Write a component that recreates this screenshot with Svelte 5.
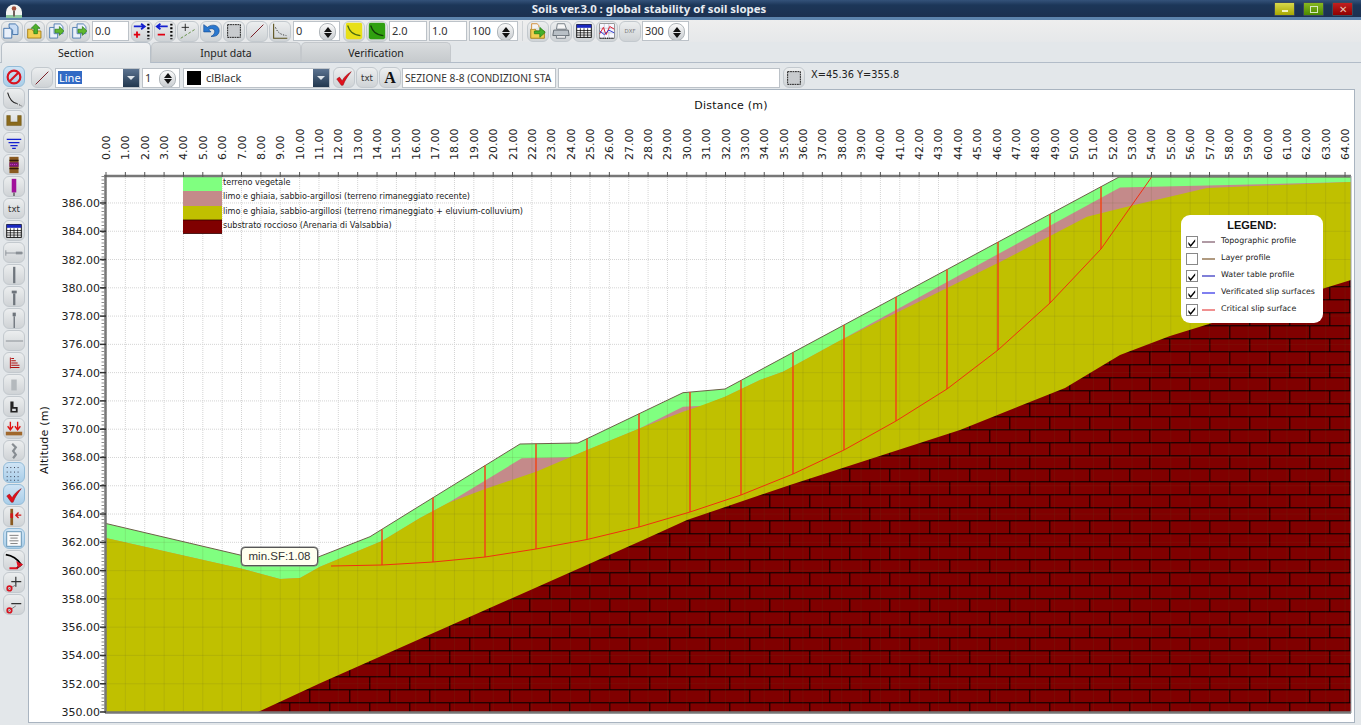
<script>
  // plot scale, in page pixels
  const x0 = 106, xUnit = 19.36, yBase = 712, yUnit = 14.14, top = 176, right = 1351;
  const xAt = (v) => x0 + v * xUnit;
  const yAt = (v) => yBase - (v - 350) * yUnit;

  const xTicks = Array.from({ length: 65 }, (_, i) => i);
  const yTicks = Array.from({ length: 19 }, (_, i) => 350 + i * 2);

  const ground = [[106,523.5],[240,555],[283,565],[300,565],[319,556.7],[370,536.7],[413,510],[520,444],[578,443],[683,392.7],[725,389],[1119,177],[1351,177]];
  const soilTop = [[106,538],[240,568.3],[280,579],[300,578],[320,566.7],[382,541],[420,518],[448,503],[485,489],[536,471.7],[570,457.3],[587,450],[640,428.3],[683,411.7],[700,406],[725,396.7],[760,380],[783,371.7],[840,340.5],[1000,262],[1087,216.7],[1127,206.7],[1207,188],[1351,182]];
  const pinkTop = [[106,538],[240,568.3],[280,579],[300,578],[320,566.7],[382,541],[420,518],[448,503],[521.7,458.3],[570,457.3],[587,450],[640,428.3],[683,406.7],[703,405.7],[725,396.7],[760,380],[783,371.7],[1000,253],[1120,187.5],[1351,182]];
  const rockTop = [[258,712],[320,683.3],[643,540],[687,520],[790,485],[960,430],[1065,388],[1120,355],[1170,336],[1351,280]];
  const slip = [[331,566],[382,565],[433,562],[485,557],[536,549],[587,539.5],[639,527],[690,512],[741,495],[793,474],[844,450],[896,421],[947,389],[998,350],[1050,303],[1101,249],[1152,176.5]];

  const pts = (list) => list.map((p) => p.join(",")).join(" ");
  const area = (list) => pts(list) + " 1351,712 106,712";

  function groundAt(x) {
    for (let i = 1; i < ground.length; i++) {
      const [ax, ay] = ground[i - 1], [bx, by] = ground[i];
      if (x <= bx) return ay + ((x - ax) / (bx - ax)) * (by - ay);
    }
    return 177;
  }
  const slices = slip.slice(1, -1).map(([x, y]) => ({ x, y, top: groundAt(x) }));

  const soilKey = [
    { color: "#80ff80", y: 177, h: 14, text: "terreno vegetale" },
    { color: "#c48a8a", y: 191, h: 15, text: "limo e ghiaia, sabbio-argillosi (terreno rimaneggiato recente)" },
    { color: "#c0c000", y: 206, h: 14, text: "limo e ghiaia, sabbio-argillosi (terreno rimaneggiato + eluvium-colluvium)" },
    { color: "#800000", y: 220, h: 13.5, text: "substrato roccioso (Arenaria di Valsabbia)" }
  ];

  const legend = [
    { on: true, color: "#b09aa4", text: "Topographic profile" },
    { on: false, color: "#b09a80", text: "Layer profile" },
    { on: true, color: "#8080d8", text: "Water table profile" },
    { on: true, color: "#8080f0", text: "Verificated slip surfaces" },
    { on: true, color: "#f09090", text: "Critical slip surface" }
  ];

  const folder = `<path d="M3 9h5l1 2h9v8H3z" fill="#f2cf52" stroke="#a67c12"/>`;
  const page = `<path d="M8 3h7l3 3v8H8z" fill="#e9f0fa" stroke="#4a78ad"/>`;
  const check = `<path d="M3 12l3-2 3 4c2-4 5-7 10-10-3 4-7 9-9 15H8z" fill="#e0101c" stroke="#8a0a12" stroke-width=".5"/>`;
  const slope = (c) => `<path d="M4 5c2 6 5 10 14 11" fill="none" stroke="${c}" stroke-width="1.4"/>`;

  const icons = {
    docs: `<path d="M2 8h7l2 2v9H2z" fill="#e9f0fa" stroke="#3b6ea8"/><path d="M8 3h7l3 3v9h-6v-5l-3-3H8z" fill="#c8dcf4" stroke="#3b6ea8"/>`,
    open: `${folder}<path d="M12 3l5 5h-3v6h-4V8H7z" fill="#4fb02c" stroke="#1f7a14" stroke-width=".8"/>`,
    save: `<path d="M3 7h7l2 2v10H3z" fill="#e9f0fa" stroke="#4a78ad"/>${page}<path d="M9 9h5V6l5 5-5 5v-3H9z" fill="#5fb82e" stroke="#2a7d16" stroke-width=".8"/>`,
    add: `<path d="M2 6h11M10 3l4 3-4 3" fill="none" stroke="#1420d0" stroke-width="2"/><path d="M2 15h7M5.5 11.500v7" stroke="#e00010" stroke-width="2"/><path d="M18 3v17" stroke="#000" stroke-width="2.500" stroke-dasharray="2 2"/>`,
    del: `<path d="M14 6H3M6 3L2 6l4 3" fill="none" stroke="#1420d0" stroke-width="2"/><path d="M3 15h8" stroke="#e00010" stroke-width="2"/><path d="M18 3v17" stroke="#000" stroke-width="2.500" stroke-dasharray="2 2"/>`,
    plusline: `<path d="M8 3v8M4 7h8" stroke="#222" stroke-width="1"/><path d="M3 19l16-10" stroke="#5d8a3a" stroke-dasharray="3 2"/>`,
    undo: `<path d="M3 4v8h8L8.500 9.500C11 7.500 16 8.500 15 12.500c-.5 2-2 3.500-4 4.500 5.500 .5 9-2 9-6.500C20 4.500 12 2.500 7 7z" fill="#2a78d0" stroke="#134a90" stroke-width=".7"/>`,
    box: `<rect x="4" y="4" width="14" height="14" fill="#c8cbce" stroke="#111" stroke-dasharray="2 .7"/>`,
    line: `<path d="M4 18L18 4" stroke="#7a2028" stroke-width="1.100"/>`,
    axes: `<path d="M4 3v16h15" fill="none" stroke="#5a5018" stroke-width="1.200"/><path d="M6 7c2 5 5 8 12 9" fill="none" stroke="#333" stroke-dasharray="1.500 1.500"/>`,
    yellow: `<rect x="2" y="2" width="18" height="18" rx="2" fill="#e8e018"/>${slope("#4a6a10")}`,
    green: `<rect x="2" y="2" width="18" height="18" rx="2" fill="#30a010"/>${slope("#123c08")}`,
    export: `${folder}<path d="M7 11h6V7l6 5.500-6 5.500v-4H7z" fill="#46b02a" stroke="#1f7a14" stroke-width=".8"/><path d="M4 9V3h6l2 2v2" fill="#f4f4f4" stroke="#d08a30"/>`,
    print: `<path d="M7 3h8l2 6H6z" fill="#f6f6f6" stroke="#707880"/><path d="M3 10h16l1 6H2z" fill="#b9c0c6" stroke="#606870"/><path d="M6 16h10v3H6z" fill="#eee" stroke="#707880"/>`,
    table: `<rect x="3" y="4" width="16" height="14" fill="#fff" stroke="#000"/><rect x="3" y="4" width="16" height="3.500" fill="#1a28c0"/><path d="M3 10.500h16M3 13h16M3 15.500h16M7 8v10M11 8v10M15 8v10" stroke="#000" stroke-width=".8"/>`,
    chart: `<rect x="3" y="3" width="16" height="16" fill="#f8f8ff" stroke="#555" stroke-width=".6"/><path d="M3 8h16M3 13h16M8 3v16M13 3v16" stroke="#99a" stroke-width=".5"/><path d="M3 14l4-7 3 8 4-9 5 3" fill="none" stroke="#e01020"/><path d="M3 11l5 4 5-5 6 3" fill="none" stroke="#2030d0"/><path d="M3 19h16" stroke="#222" stroke-width="1.500" stroke-dasharray="1 1"/>`,
    dxf: `<text x="11" y="13" font-size="6" text-anchor="middle" fill="#777" font-family="DejaVu Sans">DXF</text>`,
    stop: `<circle cx="11" cy="11" r="7" fill="none" stroke="#d81420" stroke-width="2.400"/><path d="M6 16L16 6" stroke="#d81420" stroke-width="2.400"/>`,
    curve: `<path d="M4 4c2 7 5 11 10 12" fill="none" stroke="#222" stroke-width="1.200"/><path d="M14 16l6 3" stroke="#222" stroke-dasharray="1.500 1.500"/>`,
    ushape: `<path d="M3 5h4v7h8V5h4v11H3z" fill="#8a6a1c" stroke="#6a5010" stroke-width=".5"/>`,
    water: `<path d="M3 7h16M5 10.500h12M7 14h8M9 17h4" stroke="#1420d0" stroke-width="1.400"/>`,
    layers: `<rect x="6" y="2" width="10" height="18" fill="#8a5a20"/><path d="M6 6h10M6 15h10" stroke="#301808" stroke-width="1.500"/><rect x="6" y="8" width="10" height="5" fill="#7a1a70"/><path d="M7 10.500h8" stroke="#e040e0" stroke-dasharray="1 1"/>`,
    purple: `<rect x="8.500" y="2" width="5" height="15" fill="#a0109a"/><path d="M11 17v4" stroke="#555" stroke-width="1.500"/>`,
    txt: `<text x="11" y="14.500" font-size="9.500" text-anchor="middle" fill="#333" font-family="DejaVu Sans">txt</text>`,
    hbar: `<path d="M2 11h19" stroke="#8a9096" stroke-width="1"/><path d="M2 8v6" stroke="#8a9096"/><rect x="13" y="9.500" width="7" height="3" fill="#8a9096"/>`,
    vbar: `<rect x="10" y="2" width="2.500" height="18" fill="#6e757c"/>`,
    vtee: `<rect x="10" y="7" width="2.500" height="13" fill="#6e757c"/><rect x="8.500" y="4" width="5.500" height="3" fill="#6e757c"/>`,
    vsmall: `<rect x="10.500" y="8" width="1.500" height="13" fill="#6e757c"/><rect x="9.500" y="4" width="3.500" height="4" fill="#6e757c"/>`,
    hline: `<path d="M2 11h19" stroke="#8a9096" stroke-width="1.200"/>`,
    bars: `<path d="M8 6h3M8 8.500h5M8 11h7M8 13.500h9M7 16h10" stroke="#b01010" stroke-width="1.200"/><path d="M7 5v12" stroke="#b01010"/>`,
    ghost: `<rect x="8" y="5" width="6" height="12" fill="#b4b9bd"/>`,
    stairs: `<path d="M7 5h3.500v6H15v6H7zM9 13v2.500h4V13z" fill="#222" fill-rule="evenodd"/>`,
    loads: `<path d="M7 3v8M4 8l3 4 3-4M15 3v8M12 8l3 4 3-4" fill="none" stroke="#e01010" stroke-width="1.500"/><rect x="2" y="14" width="18" height="4" fill="#a0682c"/>`,
    chain: `<path d="M9 3l4 4-3 4 3 4-3 4" fill="none" stroke="#878d92" stroke-width="2.400"/>`,
    dots: `<path d="M3 5h16M3 10h16M3 15h16M3 19h16" stroke="#223" stroke-width="1" stroke-dasharray="1 3"/>`,
    check,
    barrow: `<rect x="7" y="2" width="3" height="18" fill="#8a5a20"/><rect x="7" y="7" width="3" height="5" fill="#d01818"/><path d="M19 9h-5M16 6l-3 3 3 3" fill="none" stroke="#d01818" stroke-width="1.500"/>`,
    lines: `<rect x="3" y="3" width="16" height="16" fill="#fbfbfb" stroke="#5f8fb0"/><path d="M6 7h10M7 10h8M6 13h10M7 16h8" stroke="#777" stroke-width="1"/>`,
    arc: `<path d="M2 4c7 1 13 5 17 11-2 2-4 3-5 4" fill="none" stroke="#000" stroke-width="2"/><path d="M15 13l4 2-3 2zM6 19h9" stroke="#e01020" stroke-width="2"/>`,
    nodeAdd: `<path d="M13 4v11M8 9.500h11" stroke="#333" stroke-width="1.300"/><path d="M3 19l10-6" stroke="#777"/><circle cx="6" cy="17" r="2.500" fill="none" stroke="#d81420" stroke-width="1.800"/>`,
    nodeDel: `<path d="M8 9.500h11" stroke="#333" stroke-width="1.300"/><path d="M3 19l10-7" stroke="#777"/><circle cx="6" cy="17" r="2.500" fill="none" stroke="#d81420" stroke-width="1.800"/>`
  };

  const side = [
    ["stop", true], ["curve"], ["ushape"], ["water"], ["layers"], ["purple"], ["txt"], ["table"],
    ["hbar"], ["vbar"], ["vtee"], ["vsmall"], ["hline"], ["bars"], ["ghost"], ["stairs"], ["loads"],
    ["chain"], ["dots", true], ["check", true], ["barrow"], ["lines", true], ["arc"], ["nodeAdd"], ["nodeDel"]
  ];
</script>

{#snippet tool(name, on = false)}
  <button class="btn" class:on>
    <svg viewBox="0 0 22 22" width="22" height="22">{@html icons[name]}</svg>
  </button>
{/snippet}

{#snippet spinner()}
  <span class="spinner"><i class="up"></i><i class="down"></i></span>
{/snippet}

<div class="app">
  <header class="title">
    <svg class="logo" viewBox="0 0 18 16" width="18" height="16">
      <path d="M1 15V9a8 7.500 0 0 1 16 0v6z" fill="#f4f5f2" />
      <rect x="1" y="12" width="16" height="3" fill="#8fc9a0" />
      <circle cx="9" cy="5.500" r="2.300" fill="#a0503c" />
      <path d="M9 7.500v6" stroke="#70605c" stroke-width="2" />
    </svg>
    <span class="title-text">Soils ver.3.0 : global stability of soil slopes</span>
    <div class="win">
      <span class="wbtn min"><i></i></span>
      <span class="wbtn max"><i></i></span>
      <span class="wbtn close">✕</span>
    </div>
  </header>

  <div class="bar top">
    <div class="narrow">
      {@render tool("docs")}
      {@render tool("open")}
      {@render tool("save")}
      {@render tool("save")}
    </div>
    <span class="field w37 mr1">0.0</span>
    {@render tool("add")}
    {@render tool("del")}
    {@render tool("plusline")}
    {@render tool("undo")}
    {@render tool("box")}
    {@render tool("line")}
    {@render tool("axes")}
    <span class="field w47 ml1">0{@render spinner()}</span>
    <span class="ml2">{@render tool("yellow")}</span>
    {@render tool("green")}
    <span class="field w38">2.0</span>
    <span class="field w38 ml1">1.0</span>
    <span class="field w49 ml1">100{@render spinner()}</span>
    <span class="sep"></span>
    {@render tool("export")}
    {@render tool("print")}
    {@render tool("table")}
    {@render tool("chart")}
    {@render tool("dxf")}
    <span class="field w47">300{@render spinner()}</span>
  </div>

  <nav class="tabs">
    <span class="tab active">Section</span>
    <span class="tab">Input data</span>
    <span class="tab">Verification</span>
  </nav>

  <div class="body">
    <aside class="side">
      {#each side as [name, on]}
        {@render tool(name, on)}
      {/each}
    </aside>

    <main class="main">
      <div class="bar second">
        {@render tool("line")}
        <span class="field combo w85 ml1"><em>Line</em><i class="arrow"></i></span>
        <span class="field w38 ml1">1{@render spinner()}</span>
        <span class="field combo w147 ml2"><b class="swatch"></b>clBlack<i class="arrow"></i></span>
        <span class="ml2">{@render tool("check")}</span>
        {@render tool("txt")}
        <button class="btn"><span class="letter">A</span></button>
        <span class="field w154 tight">SEZIONE 8-8 (CONDIZIONI STA</span>
        <span class="field w222 ml1"></span>
        <span class="ml2">{@render tool("box")}</span>
        <span class="coords">X=45.36 Y=355.8</span>
      </div>

      <section class="panel">
        <svg class="plot" viewBox="29 90 1326 632" width="1326" height="632">
          <defs>
            <pattern id="brick" width="40" height="26" patternUnits="userSpaceOnUse" patternTransform="translate(9.3 520.3)">
              <rect width="40" height="26" fill="#800000" />
              <path d="M0 .5h40M0 13.500h40M.5 0v13M20.500 13v13" stroke="#000" stroke-width="1" />
            </pattern>
            <clipPath id="soil">
              <polygon points={area(ground)} />
            </clipPath>
          </defs>

          <text class="axis-title" x="731" y="109" text-anchor="middle">Distance (m)</text>
          <text class="axis-title" transform="translate(48 440) rotate(-90)" text-anchor="middle">Altitude (m)</text>

          <!-- dotted grid on the white part -->
          {#each xTicks as t}
            <path class="grid" d="M{xAt(t)} {top}V{yBase}" />
          {/each}
          {#each yTicks as t}
            <path class="grid" d="M{x0} {yAt(t)}H{right}" />
          {/each}

          <polygon points={area(ground)} fill="#80ff80" />
          <polygon points={area(pinkTop)} fill="#c48a8a" />
          <polygon points={area(soilTop)} fill="#c0c000" />
          <polygon points={pts(rockTop) + " 1351,712"} fill="url(#brick)" />

          <!-- grid stays faintly visible over the fills -->
          <g clip-path="url(#soil)">
            {#each xTicks as t}
              <path class="grid over" d="M{xAt(t)} {top}V{yBase}" />
            {/each}
            {#each yTicks as t}
              <path class="grid over" d="M{x0} {yAt(t)}H{right}" />
            {/each}
          </g>

          <polyline points={pts(ground)} fill="none" stroke="#6d6048" stroke-width="1" />

          {#each slices as s}
            <path class="slice" d="M{s.x} {s.top}V{s.y}" />
          {/each}
          <polyline points={pts(slip)} fill="none" stroke="#f03010" stroke-width="1" />

          {#each soilKey as k}
            <rect x="183" y={k.y} width="39" height={k.h} fill={k.color} />
            <text class="key" x="223" y={k.y + 8}>{k.text}</text>
          {/each}
          <path d="M183 220h39M183 233.500h39" stroke="#300000" stroke-width=".8" />

          <path class="axis" d="M105.500 175V713M105 712.500H1351" stroke-width="2.500" />
          <path class="axis" d="M104 176H1351" stroke-width="2.500" />
          <path d="M1351 176V713" stroke="#9aa0a6" stroke-width="1" />
          <path d="M103 176V712" stroke="#8c8c8c" stroke-width="3" stroke-dasharray="1 2.500" />

          {#each xTicks as t}
            <path d="M{xAt(t)} 172V177" stroke="#555" stroke-width="1" />
            <text class="tick" transform="translate({xAt(t) + 4} 160) rotate(-90)">{t}.00</text>
          {/each}
          {#each yTicks as t}
            <path d="M100 {yAt(t)}H106" stroke="#333" stroke-width="1.500" />
            <text class="tick" x="100" y={yAt(t) + 4} text-anchor="end">{t}.00</text>
          {/each}
        </svg>

        <div class="tip">min.SF:1.08</div>

        <div class="legend">
          <h4>LEGEND:</h4>
          {#each legend as item}
            <div class="row">
              <span class="box">
                {#if item.on}
                  <svg viewBox="0 0 11 11" width="11" height="11"><path d="M1.500 5l2.500 3 5-6v2.500l-5 6-2.500-3z" fill="#000" /></svg>
                {/if}
              </span>
              <span class="dash" style="background:{item.color}"></span>
              <span class="row-text">{item.text}</span>
            </div>
          {/each}
        </div>
      </section>
    </main>
  </div>
</div>

<style>
  :global(body) {
    margin: 0;
    background: #e3e7ea;
  }
  .app {
    width: 1361px;
    height: 725px;
    overflow: hidden;
    display: flex;
    flex-direction: column;
    font-family: "Noto Sans", "Liberation Sans", sans-serif;
    font-size: 12px;
    color: #222;
    background: #e3e7ea;
  }
  .title {
    height: 17px;
    flex: none;
    position: relative;
    display: flex;
    align-items: center;
    justify-content: center;
    background: linear-gradient(#34527a, #1c3658 30%, #1c3050);
    border-bottom: 3px solid #5d84ad;
  }
  .logo {
    position: absolute;
    left: 5px;
    top: 3px;
  }
  .title-text {
    color: #e8ecf2;
    font-weight: bold;
    font-size: 11.400px;
    margin-left: -63px;
  }
  .win {
    position: absolute;
    right: 8px;
    top: 2px;
    display: flex;
    gap: 8px;
  }
  .wbtn {
    width: 19px;
    height: 12px;
    border: 1px solid #3a4a5c;
    border-radius: 1px;
    display: flex;
    align-items: center;
    justify-content: center;
    font-size: 10px;
    line-height: 1;
    color: #e8c0b0;
  }
  .min {
    background: linear-gradient(#d8d84c, #a8a800);
  }
  .min i {
    width: 6px;
    height: 2px;
    margin-top: 4px;
    background: #f4f4c0;
  }
  .max {
    background: linear-gradient(#88b820, #4c8a00);
  }
  .max i {
    width: 6px;
    height: 5px;
    border: 1px solid #d8e8c0;
  }
  .close {
    background: linear-gradient(#c02020, #900000);
  }

  .bar {
    display: flex;
    align-items: center;
    gap: 1px;
  }
  .top {
    height: 22px;
    flex: none;
    padding-left: 1px;
    background: linear-gradient(#eeeeee, #e6e8ea);
  }
  .narrow {
    display: flex;
    gap: 1px;
    margin-right: 1px;
  }
  .narrow .btn {
    width: 21.500px;
  }
  .btn {
    width: 22px;
    height: 21px;
    flex: none;
    padding: 0;
    display: flex;
    align-items: center;
    justify-content: center;
    background: linear-gradient(#eceeef, #cfd3d6);
    border: 1px solid #c3c9ce;
    border-radius: 6px;
    overflow: hidden;
  }
  .btn.on {
    background: linear-gradient(#cfe4f5, #a8cde8);
    border-color: #94bcd8;
  }
  .letter {
    font-family: "Liberation Serif", serif;
    font-weight: bold;
    font-size: 16px;
    color: #111;
  }
  .field {
    height: 18px;
    flex: none;
    position: relative;
    box-sizing: content-box;
    padding: 0 0 0 2px;
    display: flex;
    align-items: center;
    overflow: hidden;
    white-space: nowrap;
    background: #fff;
    border: 1px solid #bcc2c8;
    font-size: 11px;
    line-height: 18px;
    color: #333;
  }
  .tight { font-size: 10.200px; }
  .w37 { width: 33px; }
  .w38 { width: 34px; }
  .w47 { width: 43px; }
  .w49 { width: 45px; }
  .w85 { width: 81px; }
  .w147 { width: 143px; }
  .w154 { width: 150px; }
  .w222 { width: 218px; }
  .ml1 { margin-left: 1px; }
  .ml2 { margin-left: 2px; }
  .mr1 { margin-right: 1px; }
  .sep {
    width: 1px;
    height: 20px;
    margin: 0 3px;
    background: #cfd3d6;
  }
  .spinner {
    position: absolute;
    right: 3px;
    top: 1px;
    width: 15px;
    height: 16px;
    display: flex;
    flex-direction: column;
    align-items: center;
    justify-content: center;
    gap: 1px;
    border: 1px solid #b0b6ba;
    border-radius: 8px;
    background: linear-gradient(#fafafa, #c8ccd0);
  }
  .spinner i {
    width: 0;
    height: 0;
    border-left: 4px solid transparent;
    border-right: 4px solid transparent;
  }
  .spinner .up { border-bottom: 5px solid #111; }
  .spinner .down { border-top: 5px solid #111; }
  .combo em {
    font-style: normal;
    padding: 0 1px;
    background: #316ac5;
    color: #fff;
    line-height: 13px;
  }
  .arrow {
    position: absolute;
    right: 0;
    top: 0;
    width: 16px;
    height: 18px;
    background: linear-gradient(#5c7390, #22374e);
  }
  .arrow::after {
    content: "";
    position: absolute;
    left: 4px;
    top: 7px;
    border-left: 4px solid transparent;
    border-right: 4px solid transparent;
    border-top: 4px solid #dfe5ea;
  }
  .swatch {
    width: 14px;
    height: 14px;
    margin: 0 5px 0 1px;
    background: #000;
  }

  .tabs {
    height: 20px;
    flex: none;
    display: flex;
    padding-left: 1px;
    border-bottom: 1px solid #b2bcc8;
  }
  .tab {
    width: 150px;
    box-sizing: border-box;
    text-align: center;
    line-height: 20px;
    font-size: 10.500px;
    background: linear-gradient(#d9dcde, #c6cacd);
    border: 1px solid #c4c8cc;
    border-bottom: 0;
    border-radius: 5px 5px 0 0;
  }
  .tab.active {
    height: 21px;
    background: linear-gradient(#f0f1f2, #e3e7ea);
    border-color: #b8c0c8;
  }

  .body {
    flex: 1;
    min-height: 0;
    display: flex;
  }
  .side {
    width: 25px;
    padding: 3px 0 0 3px;
    flex: none;
    display: flex;
    flex-direction: column;
    gap: 1px;
  }
  .main {
    width: 1327px;
    margin-bottom: 2px;
    display: flex;
    flex-direction: column;
  }
  .second {
    height: 26px;
    box-sizing: border-box;
    padding: 3px 0 0 3px;
    flex: none;
    width: 870px;
  }
  .coords {
    margin: -6px 0 0 5px;
    font-family: "DejaVu Sans", sans-serif;
    font-size: 9.800px;
    white-space: nowrap;
  }
  .panel {
    flex: 1;
    position: relative;
    background: #fff;
    border: 1px solid #a9b4c0;
    overflow: hidden;
  }
  .plot {
    display: block;
    font-family: "DejaVu Sans", sans-serif;
  }
  .grid {
    stroke: #d4d4d4;
    stroke-width: 1;
    stroke-dasharray: 1 1;
    fill: none;
  }
  .grid.over {
    stroke: #5a5a30;
    opacity: 0.13;
    stroke-dasharray: none;
  }
  .slice {
    stroke: #f04418;
    stroke-width: 1.500;
    fill: none;
  }
  .axis {
    stroke: #777;
    fill: none;
  }
  .tick {
    font-size: 11px;
    fill: #222;
  }
  .axis-title {
    font-size: 11px;
    letter-spacing: 0.2px;
    fill: #111;
  }
  .key {
    font-size: 8.100px;
    fill: #222;
  }
  .tip {
    position: absolute;
    left: 212px;
    top: 457px;
    width: 75px;
    height: 17px;
    text-align: center;
    line-height: 17px;
    font-family: "Liberation Sans", sans-serif;
    font-size: 11.500px;
    color: #333;
    background: #fffff0;
    border: 1px solid #555;
    border-radius: 4px;
    box-shadow: 0 0 0 .5px #777;
  }
  .legend {
    position: absolute;
    left: 1152px;
    top: 125px;
    width: 142px;
    height: 108px;
    box-sizing: border-box;
    padding: 4px 0 0 5px;
    background: #fff;
    border-radius: 9px;
    font-family: "DejaVu Sans", sans-serif;
    font-size: 7.900px;
    color: #222;
  }
  .legend h4 {
    margin: 0 0 1px;
    padding-right: 5px;
    height: 13px;
    text-align: center;
    font-family: "Liberation Sans", sans-serif;
    font-size: 11px;
    line-height: 13px;
    color: #111;
  }
  .row {
    height: 17.200px;
    display: flex;
    align-items: center;
    white-space: nowrap;
  }
  .row-text {
    margin-top: -3px;
  }
  .box {
    width: 10px;
    height: 10px;
    border: 1px solid #888;
    margin-right: 4px;
    display: flex;
  }
  .dash {
    width: 13px;
    height: 2px;
    margin-right: 6px;
  }
</style>
